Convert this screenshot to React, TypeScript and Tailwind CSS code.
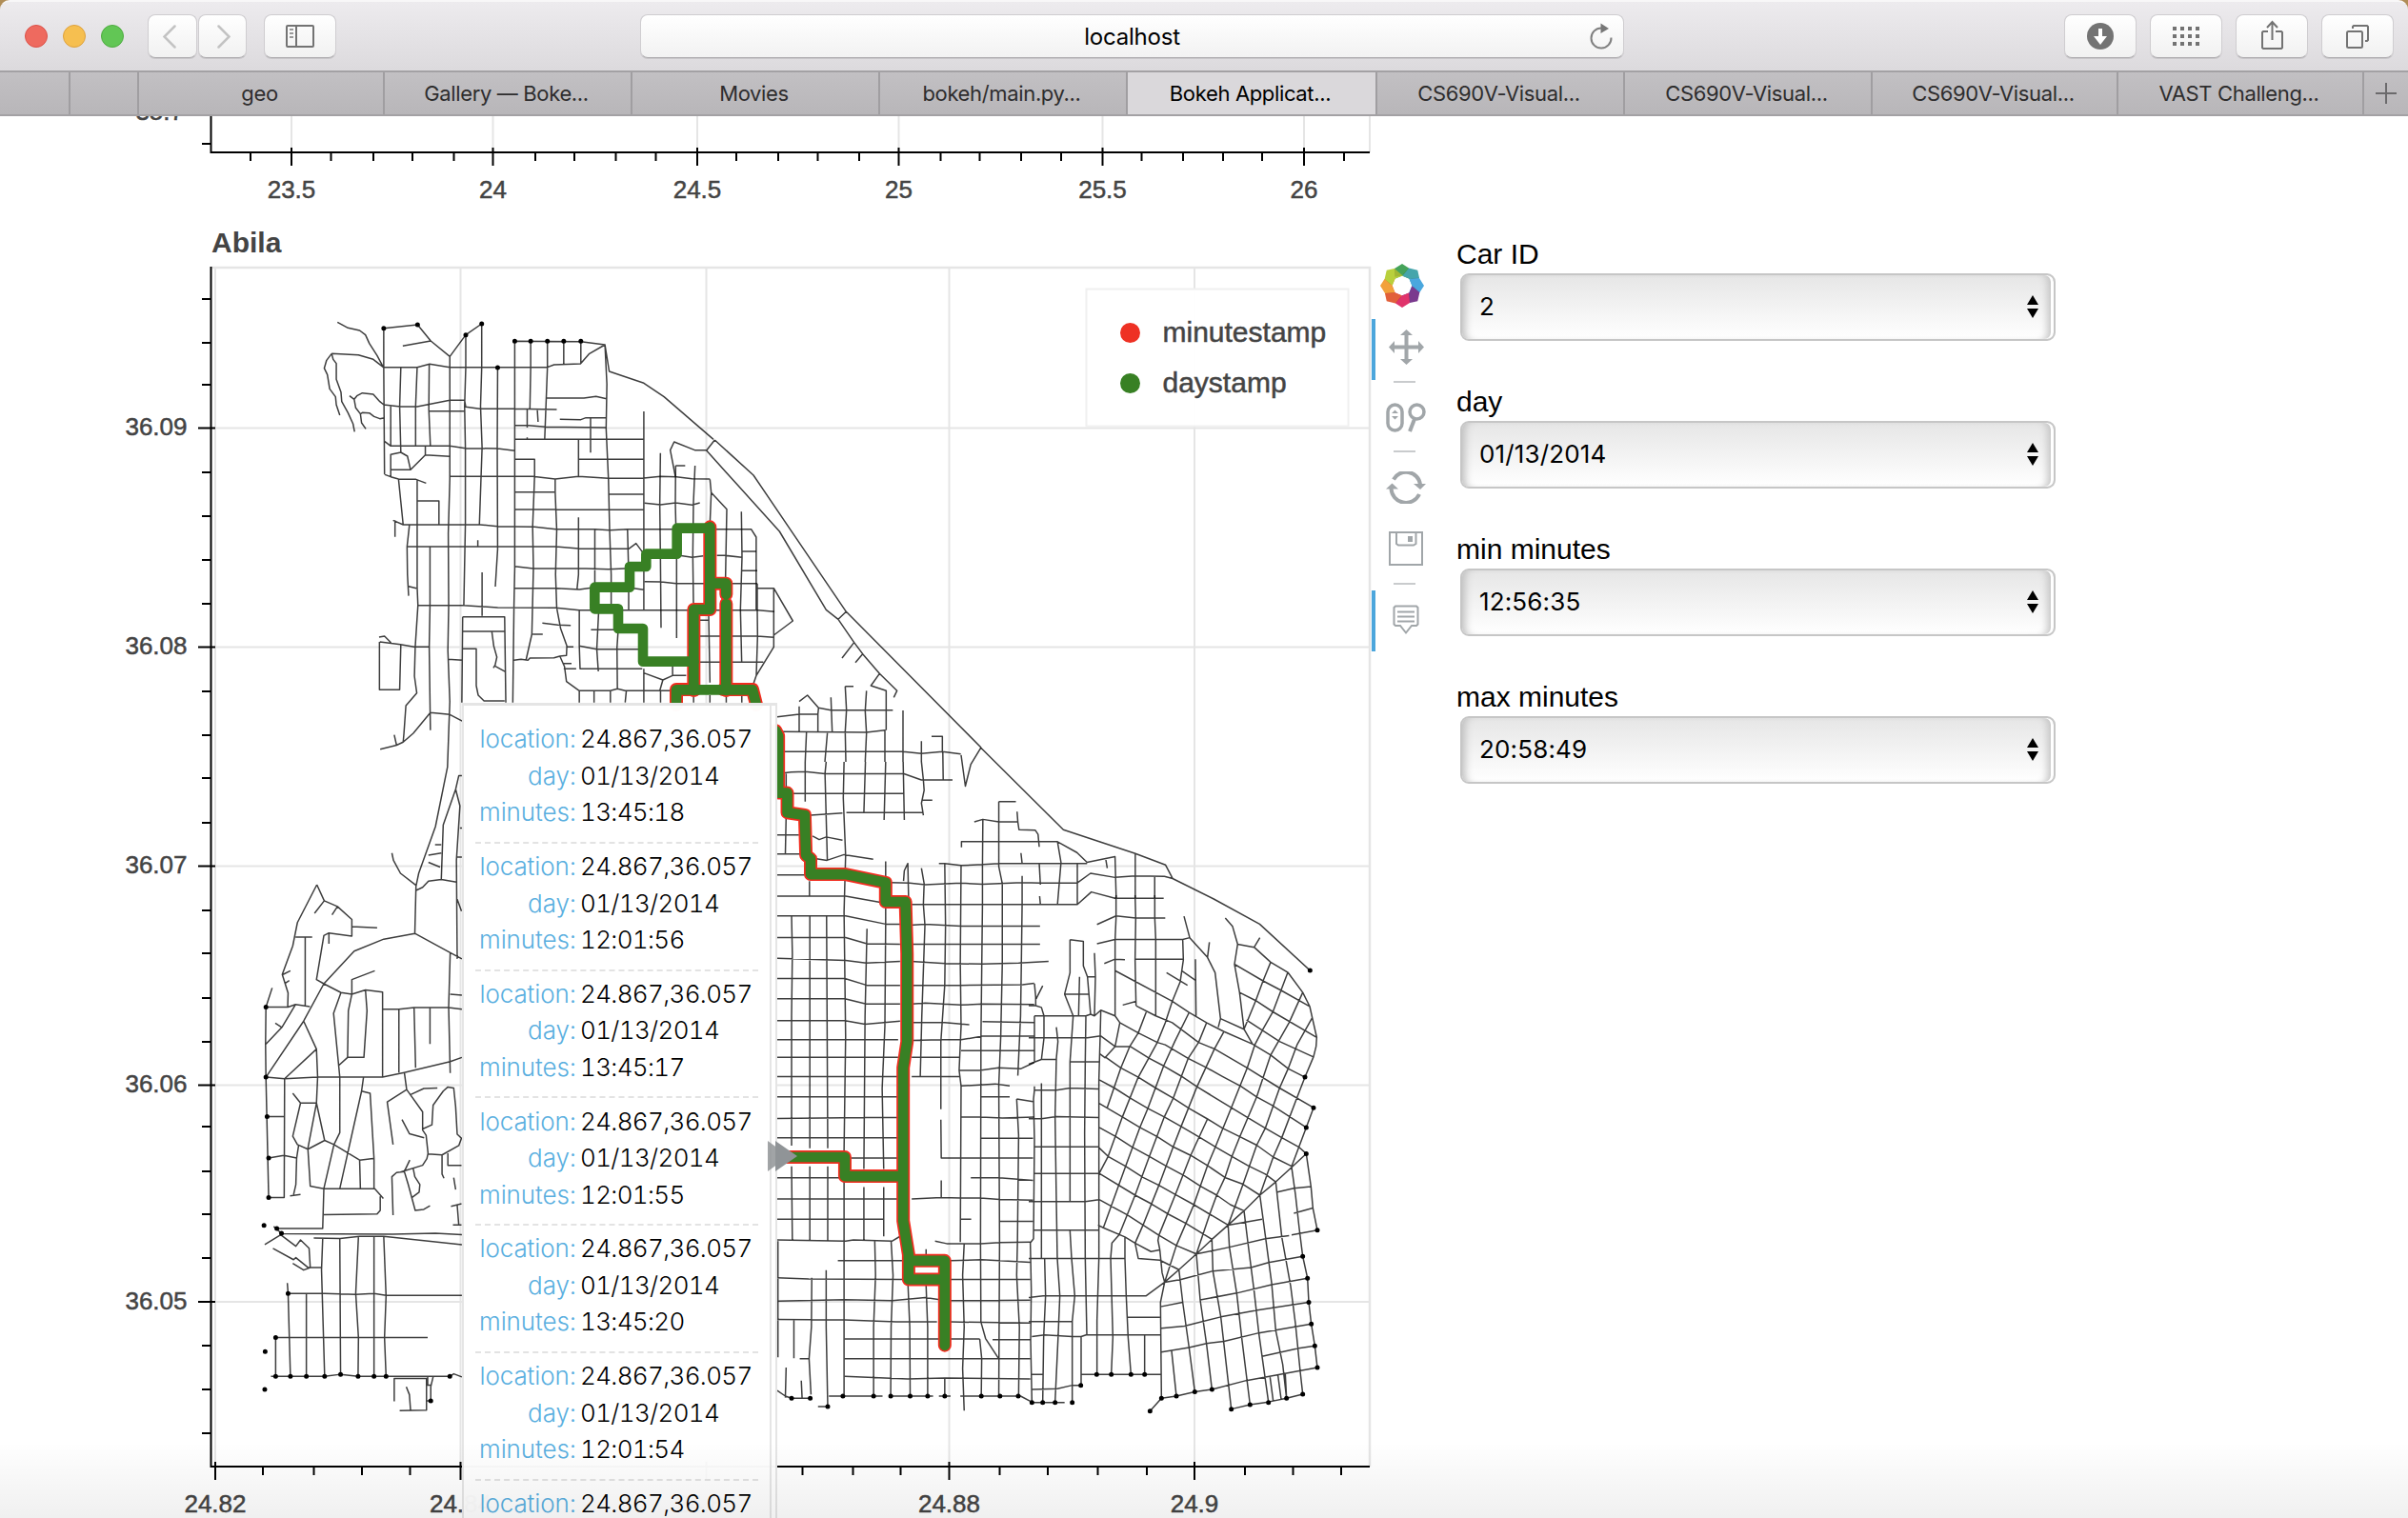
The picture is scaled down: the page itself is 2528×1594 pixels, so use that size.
import React from "react";

const roadsNW =
  "M378 205L405 223 435 231 450 245 460 272 480 310 496 347M363 304L432 308 470 322 496 347M363 304L350 325 344 350 352 370 358 415 373 440 375 465 384 498M363 304L367 322 375 335 375 385 387 425 389 455 405 490 418 525 422 550M497 224L584 213 618 264 667 313 708 245 749 210M546 280L618 264M497 224V347M496 347H583L615 337 667 347H918L935 339 1003 336 1025 305 1066 276 1004 266 834 265M834 265V347M875 265V347M918 265V347M960 265V337M1004 265V335M497 347L499 685M541 347L538 470 541 615M583 347L579 470 579 595M614 337L613 480 617 595M667 313L667 700 663 870 664 1100 662 1240 667 1400 664 1500M708 245V347L705 470 707 600 707 840 703 1097M749 210V347L746 470 750 600 743 843M790 347L789 600 790 920 784 1038M834 265L834 610 834 980 832 1100 829 1403M875 347L873 478M918 347L911 574M1066 276L1077 360 1166 397 1218 440 1345 574M1066 276L1071 400 1069 540 1075 700 1078 860 1082 1000 1082 1110M1326 608L1297 608 1244 582 1234 608 1247 690M497 465L540 471H583L667 451H705L708 472 744 478 834 478 942 480M497 465L487 455 470 432 442 428 428 437 421 448 409 437M421 448L425 475 437 494 442 490 460 491 472 502 487 509 499 506M437 494L440 522 451 541M515 470V595L499 580M515 595H667L707 602 790 603 834 610M614 485H707M866 480V537M866 568V574M892 480L894 519M834 530L870 530 913 535 1069 537M914 444H1012L1043 439 1070 446M950 511L1004 512 1017 506 1070 506M1029 506V616M834 574H1166M1166 486V1110M998 574V690M998 637H1166M834 637H885V690L880 850 882 980 878 1188 863 1269M667 691H880L938 699 998 691 1075 697 1166 696 1209 691 1250 692 1290 698 1336 699M938 699L938 740 942 860 939 1000 942 1105 952 1170 968 1225 967 1255 950 1257 935 1262 873 1263 868 1270 850 1267 832 1270M834 740H936M1075 747H1166M834 795H940L1166 796M515 670V692L500 685M515 692L535 699 580 700 606 712M515 692V622L541 615 558 627 566 670M515 670H566L604 623V595M604 623L667 628M535 699L547 843M583 700V1040L585 1097M583 768H639V843M521 829L547 843H745L790 848 885 850 940 857 1040 857 1078 860 1124 857 1442 857L1455 882V1110M526 829V881M563 845L557 912 558 1000 561 1067M561 1037L581 1043M557 912H940L998 918 1127 919 1146 902 1166 935M739 892V912M616 912L616 1097 614 1228 617 1490M834 974L882 981 998 980 1075 983 1130 980M750 993V1130M834 1043L942 1043 1000 1047 1040 1040M1130 1042L1166 1048M998 820L998 1000 994 1048M1040 857V1035M1124 857L1127 1000V1110M585 1097H703L790 1104 940 1105 1000 1112 1460 1112 1502 1117M700 1133H808L811 1403M700 1133L698 1403M698 1179H808M775 1179L780 1225 788 1260 783 1288 811 1307M779 1294L783 1286M700 1234H735V1350L740 1380 755 1398H808M662 1267L700 1270M485 1197L499 1194 516 1215M487 1212L540 1220 575 1228H614M486 1212V1363H538L541 1220M585 1097L578 1228 576 1320 582 1373 554 1413 549 1500M573 1500L617 1435 667 1441 700 1462M905 1153L945 1159 978 1160M880 1188H906M968 1228H985M958 1280H980M960 1297H992M950 1257L962 1290 967 1337 1000 1366M1000 1366H1080L1098 1360 1118 1366H1240M1000 1366V1403M1038 1366V1403M1080 1366V1403M1121 1366L1118 1403M1166 1297V1403M1209 1366V1403M1250 1380V1403M1294 1380V1403M1336 1380V1403M1378 1380V1403M1418 1380V1403M1000 1112V1225L1002 1297H1162M1000 1225L1045 1235H1160M1050 1112L1045 1235 1049 1305M1100 1175L1097 1230 1098 1360M1030 1174H1095M1166 1310L1215 1332 1240 1318H1275M1215 1332L1207 1366M1240 1290V1318";

const roadsN =
  "M230 385L280 390 328 384 380 391 404 384M280 227L278 390 280 550 282 778M328 267H358M328 267L327 384 331 550V810M389 267L384 384 382 550 384 700M436 310L440 352 489 404 485 620M440 352L436 450M535 412L537 555 532 720 536 886M458 550L485 550 537 556M340 550L380 556 415 551M537 537H582M537 598H585M230 632L282 633 330 638H585M585 653H637L697 756 637 801V838L582 928 571 960M637 653V801M585 638V721L586 804 582 928M400 804H585L637 808M405 754H432M432 740L436 950M400 886H604M451 186L573 297 700 484 865 727 1290 1155M451 186L425 219 655 474 802 721 840 751 865 727M840 751L890 824 852 873M890 824L917 860 894 887M917 860L970 922 943 960 991 976V1100M970 922L1025 976 1015 997M862 962H888M862 962L866 1037 862 1105 864 1200M717 1010L743 990 778 1030 817 1037H1012M648 1058L717 1050H776V1105M778 1030L776 1050M717 1025V1105M817 997L821 1105M929 976L925 1040 929 1110 925 1200M1044 1038V1200M660 1105L929 1107 987 1100 987 1200M740 1107L736 1200M806 1107L798 1200M665 1168H1044L1102 1174 1168 1168 1226 1175M1134 1120H1168V1168M1102 1135V1200";

const roadsSW =
  "M549 55L547 72 530 78 488 86M530 78L524 58M547 72L573 55M664 55L661 120 630 235 587 325 580 350 577 441M518 286L522 300 540 325 580 348M698 137H690L682 163 650 232 645 338M682 163L693 195 684 300 686 490M580 358L597 352 612 340 645 337 684 342M629 270H645M612 290L645 286M612 304L642 313M693 238h6M684 294h14M686 375L697 398M577 441L497 452 421 475 343 538 291 610 194 718M577 441L668 478 698 490M668 478L664 584 668 710M668 558L698 560M325 347L344 378 378 389 415 414V446L356 440 343 445 324 530 343 538 387 555 415 558 450 550 494 554V718M325 347L275 420 263 465 236 520 251 556 250 582M344 378L319 402M378 389L364 405M415 428L480 430M356 440V461M270 448H313M295 448V580M238 520L257 513M244 537L254 532M210 546L194 583 193 655 194 718 201 950H241L242 721M194 583H251L270 578 307 582M193 655L235 622 270 578M218 614L235 622M291 610L324 664 327 718 324 768 302 855M242 721L324 664M194 718L242 721 327 718H494L550 709 668 688 698 680M387 555L368 595 384 718V825L369 848 343 933M415 558V530L474 513M415 558L406 590 404 680H446L454 590 450 550M404 680L382 695M494 587H536L575 584H664L698 587M536 587V709M575 584L579 700M616 584V654M197 794H241M201 874L240 869 273 874M263 749L283 768H324L345 840 369 848 435 878 470 875M283 768L263 832 275 848 302 857 345 840M278 850L273 874 271 925 265 945M256 947L283 944M302 857L308 928 343 933H474L496 952M488 948V975L480 982 343 983M343 933L340 1010H220M445 718L440 745 384 933M440 745L462 749 472 875V933M435 878L437 933M521 848L506 766 556 742 550 709M556 742L597 785 597 820 606 830 611 865 608 875 597 888 540 901M565 752L600 740 635 739M544 800L563 827 601 835M597 818L621 810 624 772 650 745 662 737 677 739 682 775 686 828 697 836 690 850 647 868 611 866M521 984L518 910 530 902 550 900 564 878M550 900L560 925 578 975 600 973 616 966M573 895L577 910 590 925 588 940 570 950M647 868V905L652 913M662 865V888H697M677 912L682 935M670 967L697 962M686 965L690 1003M675 1003H697M191 1041L232 1022 271 1044 283 1032 305 1048 308 1085 291 1090 263 1077M212 1048L265 1070 271 1066 302 1085H337M214 1006L235 1020 520 1021 630 1019 698 1022M317 1028L385 1029 435 1025 497 1025 698 1041M340 1030L337 1090 345 1295M384 1030L386 1290M432 1025L425 1135 432 1220 431 1295M472 1025V1295M497 1025L503 1140 499 1220 503 1295M249 1115L251 1135H345L425 1137 472 1135 503 1139H698M251 1135L257 1295M298 1135V1295M219 1220H610M219 1220V1295M207 1295H345L386 1291 431 1295H667L677 1290 698 1296M524 1343V1299H607V1360L538 1361M555 1315L563 1330 566 1360M610 1295V1312H618M624 1296L618 1315V1342H608";

const roadsS =
  "M563 83L775 241 960 287 1038 309 1056 335 1163 375 1280 423 1409 512M563 83L537 115 523 157 512 97M39 133L75 130 111 129 162 133H365L410 145H490M62 133V165M111 110V187M165 110L162 133 168 300M211 110L209 180 215 290 211 400M266 110L262 208M318 110L314 222M363 110L366 222M410 110L415 145 417 165 410 190 415 213M465 92L466 145M75 171H363M125 213L207 209M217 208H415M410 184H438M130 253L147 260 165 255 207 261M39 251H95M62 215L60 288M39 288H100M140 297L167 300 211 289 286 298M39 328H110M122 340V369M39 369H215L318 383M609 187V312M609 187H653M546 226L568 221 609 226H658L656 206M658 226L661 241 703 242 710 250 713 274M513 275V264H760L810 285 836 304 908 293 911 373M760 264L769 304 760 385M568 221L567 310M455 306H470L512 310 568 308 609 306H836M884 297L888 315M666 286L669 306M713 306L716 347M811 306V385L847 361 908 373M318 302V335M364 340L366 320 375 306 377 375M410 315L417 345 415 385 419 425 411 600 407 717M330 343L380 344 420 347 512 344 567 346 669 343 716 344H810L845 325 908 333 960 330 1035 331 1056 335M385 385H810M714 369L716 385M669 330V385L667 500 665 600 658 715M470 306L472 425 470 540 460 650 460 780M512 310L510 500 512 620 507 705 512 735 510 1036M567 310V385L563 650 563 700 562 1036 563 1190M609 312L618 345 618 500 614 640 609 733 611 1035 609 1330M960 287V373M1010 331V373M380 425L420 423 512 427H715M383 462H715M383 495L472 499 567 500 660 498 737 495M385 541L510 541 670 540 700 537M705 567L722 542M385 577L420 575 512 579 567 577 700 578M385 613H470L533 617M567 611L700 613M385 647L460 646 512 646 567 639H700M385 680H508M385 717H508M512 667H700M508 705L560 705 608 700 665 702 700 690M512 735L600 731 637 735M562 756H637M512 795H562L618 797 700 795M562 836H697M460 800L461 874H697M537 912H610L697 917M461 917V950M385 953L461 950 512 951H562L611 954 697 955M512 992H538M611 996H697M445 1034L475 1039H562L611 1037 690 1036M655 760L697 765M655 760L660 830 657 1036M39 407H215L318 423H355M39 449H215L270 461 355 462M39 489L215 493 268 498 355 495M39 528H213L270 541H355M39 567H213L268 577 355 577M39 609H213L265 616 355 610M39 646H350M39 680H350M39 717H350M39 756H350M39 798L262 796H350M39 835H350M230 874H350M39 912H200M39 953H350M39 992H313M39 1032L215 1034 235 1032 335 1034 355 1025M76 407L78 480 76 600V850M76 890L78 1034M123 407V855M123 890V1034M166 407L169 855M169 890V1034M211 400L215 640 211 860M211 920V1330M270 432L265 600 262 895M262 930V1032M318 383V423L316 620 309 740 313 895M313 930V1025M41 1034V1258M39 1105L120 1107 365 1108M385 1108H690M195 1072H365M485 1072L565 1070 690 1075M39 1150L213 1147 335 1149 420 1143 457 1147M485 1149L690 1148M39 1185L213 1186 345 1190 450 1190M485 1190L690 1192M213 1223H455M485 1223H560M593 1224H690M213 1261H690M213 1295L375 1300 470 1298 690 1300M172 1333H310M330 1333H440M455 1333H485M510 1333H665L690 1343M128 1105L127 1200 121 1261 126 1330M97 1261H120M165 1090V1200L169 1353H144M82 1186V1260M62 1278L60 1336M101 1303L103 1336M39 1322L60 1333 76 1337H124M290 1034L292 1100 287 1200 287 1330M332 1034L337 1100 332 1200 331 1330M375 1110L380 1200 381 1330M422 1120L426 1200 426 1330M422 1050V1060M470 1300V1330M520 1039L516 1100 520 1200 516 1280 520 1361M563 1190L575 1222 609 1261M560 1223L565 1260 564 1330M657 1036L655 1100 662 1200 660 1333";

const roadsSE =
  "M270 9H425M335 0L337 67 335 190 338 325M397 0V67L400 130V355M275 0V67L272 130V355M215 86L275 61 337 67H430M215 143L272 130H485M238 201L272 188 303 190M335 188H487M485 130L487 190 477 255 452 312M485 130L507 125 489 62M507 125L563 183 569 138M563 183L587 228 604 363 597 388M604 363L678 394 705 438M434 228L500 265M483 223L525 250M525 188L527 355M272 222L452 312 505 345 560 375 615 401 705 438M619 67L642 92 658 144 710 153 728 125M710 153L762 197 816 227 863 286 885 327 893 360 907 418 905 445 897 475 870 535M658 144L648 203 664 286 678 394M648 203L738 252 795 280 885 327M664 286L715 310 769 343 907 418M686 367L790 430 895 475M338 325L400 355 452 375 535 433 585 452 688 508 790 567 897 625M705 438L762 470 817 510 870 535M287 375L345 405 405 433 430 440 502 480 560 507 610 533 668 562 718 593 765 617 874 683M272 445H320L380 480 425 502 480 532 530 563 638 625 695 657 745 685 797 713 850 740 874 760M240 475L290 508 345 535 400 567 455 597 505 627 M563 658L610 685 665 710 718 735 770 770 828 797M222 543L270 567 320 597 375 627 427 652 480 680 535 710 588 740 640 768 690 795 745 820 778 843M505 627L563 658M222 612L295 652 350 683 405 710 455 740 510 765 563 795 618 830 675 850 728 882M222 683L275 710 325 740 380 768 430 795 490 825 540 855 592 882 635 910 678 928M222 743L250 768 305 797 360 830 410 853 462 880 520 910 570 938 628 970M222 818L335 882 387 908 440 938 495 965 577 1012M222 895L310 940 360 970 410 1000 465 1030 528 1055M218 970L235 978 303 1005 335 1023 385 1048 412 1043M335 1023L345 1068 413 1073 473 1101M370 344L345 405 318 445 290 508 247 625M452 312L430 375 405 433 345 535 295 652 250 768 222 818M505 345L460 430 425 502 375 627 350 683 305 797 235 978M560 375L535 433 502 480 455 597 427 652 380 768 335 882 285 998 262 1023 258 1068M615 401L585 452 530 563 480 680 455 740 410 853 360 970 335 1023M563 658L510 765 462 880 410 1000 407 1015 413 1043M712 440L688 508 638 625 588 740 563 795 520 910 495 965 465 1030 428 1138M762 197L738 252 715 310 678 394M816 227L769 343 740 390 712 440M863 286L820 375 762 470 718 593 665 710 640 768 618 830 592 882 570 938 528 1055M893 360L845 440 817 510 790 567 745 685 718 735 675 850 628 970M870 535L845 595 797 713 770 770 728 882M897 625L874 683 828 797M874 760L828 800 778 843 728 882 678 928 628 970 577 1012 528 1055 473 1101 428 1138 370 1178H45L0 1183M874 760L889 857 895 920 909 985M783 873L835 862 889 857M835 935L895 920M828 800L840 880 852 980 863 1062 878 1126 882 1197 890 1261 901 1325 909 1389M778 843L797 1005 825 1150 840 1260 855 1400 863 1467M728 882L745 1000 765 1140 778 1280 800 1380 812 1480M678 928L690 1020 710 1165 725 1290 755 1490M628 970L632 1035 655 1170 672 1310 697 1498M577 1012L580 1105 605 1240 638 1511M528 1055L540 1190 560 1320 577 1453M473 1101L485 1197 505 1330 523 1460M428 1138L415 1197 418 1479M450 1340L465 1473M628 970L735 953M528 1055L632 1035 745 1010 820 1001M828 999L909 985M428 1138L480 1130 580 1105 700 1095 755 1080 863 1062M540 1190L655 1170 765 1145 878 1126M415 1210L485 1197M418 1273L490 1267 605 1240 720 1220 882 1197M418 1343L505 1330 560 1318 615 1312 725 1287 890 1261M735 1356L850 1332 901 1325M418 1479L465 1473 523 1460 577 1453 685 1427 909 1389M638 1511L697 1498 755 1490 812 1479 863 1467M760 1417L770 1487M785 1412L795 1482M808 1408L812 1479M382 1517L418 1479M130 131L172 136V208L185 240 195 352M130 131V228L113 291 140 355M113 291H190M160 240L157 355M207 170L210 240 207 355 195 350 180 355H18M185 240H210M207 355L227 338 272 355 287 375 272 445 240 478 222 465M227 338L225 415 221 543V1068L215 1250V1409M180 355L178 490 176 700 178 1068 183 1292M140 355L130 490V900M130 987L135 1068 145 1178 137 1253V1490M87 388L92 430 87 480 83 650 87 900 90 1068 98 1178 92 1310 83 1490M40 553V1068M50 1068L53 1178 47 1300 44 1490M18 260L22 300V325M18 355V490M48 355V420L40 483M0 325H22L40 330 48 355M0 497L40 483H87M0 419H185L227 414 272 445M130 490H221M18 562V573L15 600 18 720 15 1010 5 1022 8 1160 6 1310 10 1490M18 573H87L130 567 221 570M0 657H40L87 651 221 654M18 740H221M18 818H221M0 901H178L221 895M15 985H221M0 1068H303V1005M303 1068L307 1178 313 1300 322 1409M258 1068L265 1300 260 1409M165 1409H418M183 1293H418M310 1241H413M365 1293V1409M0 1254H137M10 1298L50 1293 137 1298 165 1298 183 1292M165 1298V1441H137L90 1451 10 1453M10 1409H44M10 1492H113M413 1043L420 1110 428 1138M296 323L338 312";

const dotsNW = "M497 224h0M584 213h0M708 245h0M749 210h0M790 348h0M834 265h0M875 265h0M918 265h0M960 265h0M1004 265h0";
const dotsSW =
  "M194 583h0M194 718h0M197 794h0M201 874h0M201 950h0M189 1004h0M222 1010h0M234 1019h0M251 1135h0M219 1220h0M192 1247h0M191 1320h0M219 1295h0M257 1295h0M298 1295h0M345 1295h0M386 1291h0M431 1295h0M472 1295h0M503 1295h0M667 1295h0M618 1342h0";
const dotsS =
  "M76 1337h0M124 1337h0M169 1353h0M208 1333h0M287 1333h0M331 1333h0M381 1333h0M426 1333h0M470 1333h0M564 1333h0M612 1333h0M659 1333h0";
const dotsSE =
  "M10 1492h0M44 1492h0M83 1492h0M137 1492h0M164 1441h0M214 1409h0M260 1409h0M322 1409h0M365 1409h0M382 1517h0M418 1479h0M465 1473h0M523 1460h0M577 1453h0M638 1511h0M697 1498h0M755 1492h0M812 1479h0M863 1467h0M909 1389h0M901 1325h0M890 1261h0M882 1197h0M878 1126h0M863 1062h0M909 985h0M874 760h0M874 683h0M897 625h0M870 535h0M886 221h0";

const NW = "translate(200 270) scale(0.40816 0.33333)";
const N = "translate(600 400) scale(0.33333)";
const SW = "translate(200 740) scale(0.40816 0.54464)";
const S = "translate(800 740) scale(0.40816 0.54464)";
const SE = "translate(1080 940) scale(0.33333 0.35714)";

const regions = [
  { t: NW, roads: roadsNW, dots: dotsNW },
  { t: N, roads: roadsN, dots: "" },
  { t: SW, roads: roadsSW, dots: dotsSW },
  { t: S, roads: roadsS, dots: dotsS },
  { t: SE, roads: roadsSE, dots: dotsSE },
];

const dayNorth = "M436 464H332V545H235V585H183V650H73V718H147V780H225V884H385";
const loopNorth = "M436 460V720H385V975M436 638H487V672M487 702V975";
const minuteEnds = "M330 1020V972H390M478 972H570L582 1020";
const dayBase = "M330 1020V973H570L582 1020";
const trackSouth =
  "M35 50L42 60V170H65V208L110 213 113 290 125 297V327H215L318 343V380H369L373 480V650L363 700V995L377 1060V1108H470M377 1072H470V1235M60 872H213V909H363";

const topMajor: [number, string][] = [
  [306, "23.5"], [517.5, "24"], [732, "24.5"], [943.5, "25"], [1157.5, "25.5"], [1369, "26"],
];
const topMinor = [263, 347.5, 392, 433, 476.5, 562, 603, 646.5, 688.5, 773, 817, 858.5, 902, 987.5, 1028.5, 1072, 1114, 1198.5, 1242, 1284, 1325, 1411];
const xMajor: [number, string][] = [[226, "24.82"], [483.5, "24.84"], [741.5, "24.86"], [996.5, "24.88"], [1254, "24.9"]];
const xMinor = [276, 329.5, 380, 430.5, 842.5, 895.5, 945.5, 1049.5, 1100, 1152.5, 1204, 1307, 1357.5, 1408];
const yMajor: [number, string][] = [[449.5, "36.09"], [679.5, "36.08"], [909.5, "36.07"], [1139.5, "36.06"], [1367, "36.05"]];
const yMinor = [314, 360, 404, 496, 542, 588, 634, 726, 772, 817, 864, 956, 1001, 1048, 1094, 1183, 1230, 1275, 1321, 1413, 1459, 1505];

function Chart() {
  return (
    <svg width="1440" height="1472" viewBox="0 122 1440 1472" className="block shrink-0 font-['Liberation_Sans',Arial,sans-serif]" fontSize="26" fill="#444">
      <g stroke="#e5e5e5" strokeWidth="2" fill="none">
        {topMajor.map(([x]) => <path key={x} d={`M${x} 122V160`} />)}
        <path d="M1438 122V160" />
        <path d="M222 281H1438V1540" strokeWidth="2.5" />
        {xMajor.map(([x]) => <path key={x} d={`M${x} 281V1540`} />)}
        {yMajor.map(([y]) => <path key={y} d={`M222 ${y}H1438`} />)}
      </g>

      {regions.map((r) => (
        <g key={r.t} transform={r.t} fill="none" strokeLinejoin="round">
          <path d={r.roads} stroke="#000" strokeOpacity="0.76" strokeWidth="1.5" vectorEffect="non-scaling-stroke" />
          <path d={r.dots} stroke="#000" strokeWidth="5" strokeLinecap="round" vectorEffect="non-scaling-stroke" />
        </g>
      ))}

      <g fill="none" strokeLinejoin="round" strokeLinecap="round">
        <g stroke="#f22c1f" strokeWidth="14">
          <path transform={N} d={loopNorth} vectorEffect="non-scaling-stroke" />
          <path transform={N} d={minuteEnds} vectorEffect="non-scaling-stroke" />
          <path transform={S} d={trackSouth} vectorEffect="non-scaling-stroke" />
        </g>
        <g stroke="#388024" strokeWidth="10.6">
          <path transform={N} d={dayNorth} vectorEffect="non-scaling-stroke" />
          <path transform={N} d={loopNorth} vectorEffect="non-scaling-stroke" />
          <path transform={N} d={dayBase} vectorEffect="non-scaling-stroke" />
          <path transform={S} d={trackSouth} vectorEffect="non-scaling-stroke" />
        </g>
      </g>

      <g stroke="#000" strokeWidth="2" fill="none">
        <path d="M221.5 122V160H1438M212 151H222M221.500 280V1540H1438" />
        {topMajor.map(([x]) => <path key={x} d={`M${x} 155V174`} />)}
        {topMinor.map((x) => <path key={x} d={`M${x} 160V169`} />)}
        {xMajor.map(([x]) => <path key={x} d={`M${x} 1535V1554`} />)}
        {xMinor.map((x) => <path key={x} d={`M${x} 1540V1549`} />)}
        {yMajor.map(([y]) => <path key={y} d={`M208 ${y}H226`} />)}
        {yMinor.map((y) => <path key={y} d={`M212 ${y}H222`} />)}
      </g>
      <g textAnchor="middle" stroke="#444" strokeWidth="0.5">
        {topMajor.map(([x, t]) => <text key={x} x={x} y="208">{t}</text>)}
        {xMajor.map(([x, t]) => <text key={x} x={x} y="1588">{t}</text>)}
      </g>
      <g textAnchor="end" stroke="#444" strokeWidth="0.5">
        <text x="193" y="125.500">35.7</text>
        {yMajor.map(([y, t]) => <text key={y} x="196.500" y={y + 7.5}>{t}</text>)}
      </g>
      <text x="222" y="265" fontSize="30" fontWeight="700">Abila</text>

      <rect x="1140.500" y="303.500" width="275" height="144" fill="#fff" fillOpacity="0.95" stroke="#f0f0f0" strokeWidth="2" />
      <circle cx="1186.500" cy="349.500" r="10.500" fill="#ee3124" />
      <circle cx="1186.500" cy="402.500" r="10.500" fill="#388024" />
      <g fontSize="30" stroke="#444" strokeWidth="0.5">
        <text x="1220.500" y="359">minutestamp</text>
        <text x="1220.500" y="412">daystamp</text>
      </g>
    </svg>
  );
}

const hits = ["13:45:18", "12:01:56", "13:45:17", "12:01:55", "13:45:20", "12:01:54", "13:45:19"];

function Tooltip() {
  return (
    <div className="absolute left-[485px] top-[616px] h-[856px] w-[331px] overflow-hidden border-x-[2px] border-t-[3px] border-[#e5e5e5] bg-white/[0.98]">
      <div className="h-[900px] w-[323px] border-r-[2px] border-[#e5e5e5] px-[12px] pt-[11px] font-['Inter',sans-serif] text-[26px] font-light">
        {hits.map((m, i) => (
          <div key={i} className="h-[133.8px] border-b-[2px] border-dashed border-[#e3e3e3] pt-[5px]">
            {[["location:", "24.867,36.057"], ["day:", "01/13/2014"], ["minutes:", m]].map(([k, v]) => (
              <div key={k} className="flex h-[38.5px] items-center whitespace-nowrap leading-[38px]">
                <span className="w-[106px] shrink-0 text-right tracking-[-0.1px] text-[#5aafdf]">{k}</span>
                <span className="ml-[4px] tracking-[-0.65px] tabular-nums text-black">{v}</span>
              </div>
            ))}
          </div>
        ))}
      </div>
    </div>
  );
}

const petals = ["#46a35a", "#45a5ab", "#4aa7de", "#7a3a8e", "#e0336b", "#e2603a", "#f2a13c", "#b9d03c"];

function BokehLogo() {
  return (
    <svg width="46" height="46" viewBox="-23 -23 46 46">
      {petals.map((c, i) => (
        <g key={c} transform={`rotate(${i * 45})`}>
          <path d="M-8 -18L0 -23 7 -18.500 8 -7 0 -10.500 -7 -7.500Z" fill={c} />
          <path d="M1 -12L7 -18.500 8 -7Z" fill="#000" fillOpacity="0.12" />
        </g>
      ))}
    </svg>
  );
}

const G = "#a1a6a9";

function PanIcon() {
  return (
    <svg width="37" height="37" viewBox="0 0 37 37" fill={G} className="mb-[5px]">
      <path d="M16.500 6H12L18.500 0 25 6H20.500V16.500H31V12L37 18.500 31 25V20.500H20.500V31H25L18.500 37 12 31H16.500V20.500H6V25L0 18.500 6 12V16.500H16.500Z" />
    </svg>
  );
}

function WheelZoomIcon() {
  return (
    <svg width="42" height="31" viewBox="0 0 42 31" fill="none" stroke={G}>
      <rect x="2" y="2" width="15" height="27" rx="7.500" strokeWidth="3.500" />
      <path d="M6 11L9.500 7.500 13 11ZM6 14L9.500 17.500 13 14Z" fill={G} stroke="none" />
      <circle cx="32.500" cy="9.500" r="7.500" strokeWidth="3.500" />
      <path d="M30 17L25 30" strokeWidth="4" />
    </svg>
  );
}

function ResetIcon() {
  return (
    <svg width="42" height="34" viewBox="0 0 42 34" fill="none" stroke={G} strokeWidth="4">
      <path d="M8 8.500A15 15 0 0 1 36 13.500M5.500 18A15.500 15.500 0 0 0 35 24" />
      <path d="M29 13H42L36 19ZM0 18.500H13L6.500 12.500Z" fill={G} stroke="none" />
    </svg>
  );
}

function SaveIcon() {
  return (
    <svg width="36" height="36" viewBox="0 0 36 36" fill="none" stroke={G} strokeWidth="2">
      <rect x="1" y="1" width="34" height="34" />
      <path d="M8 1V13L10 14.500H26L28.500 13V1" />
      <rect x="20" y="5" width="5" height="6" fill={G} stroke="none" />
    </svg>
  );
}

function HoverIcon() {
  return (
    <svg width="28" height="32" viewBox="0 0 28 32" fill="none" stroke={G} strokeWidth="2" className="mb-[3px]">
      <path d="M3 1.500H25L26.500 3V20.500L25 22H20L14 29.500 8 22H3L1.500 20.500V3Z" />
      <path d="M5 7.500H23M5 12.500H23M5 17.500H23" />
    </svg>
  );
}

function Tool({ active, children }: { active?: boolean; children: React.ReactNode }) {
  return (
    <div className={`flex h-[64px] w-[72px] items-center justify-center border-l-4 pr-[4px] ${active ? "border-[#4ca6dc]" : "border-transparent"}`}>
      {children}
    </div>
  );
}

function Toolbar() {
  const sep = <div className="my-[0.5px] ml-[23px] h-[2px] w-[23px] bg-[#c9cbcd]" />;
  return (
    <div className="flex w-[80px] shrink-0 flex-col pt-[155px]">
      <div className="mb-[12px] ml-[9px]"><BokehLogo /></div>
      <Tool active><PanIcon /></Tool>
      {sep}
      <div className="h-[4px]" />
      <Tool><WheelZoomIcon /></Tool>
      <div className="h-[2px]" />
      {sep}
      <div className="h-[5px]" />
      <Tool><ResetIcon /></Tool>
      <Tool><SaveIcon /></Tool>
      <div className="h-[3px]" />
      {sep}
      <div className="h-[6px]" />
      <Tool active><HoverIcon /></Tool>
    </div>
  );
}

function Select({ label, value }: { label: string; value: string }) {
  return (
    <div className="mb-[47px]">
      <div className="h-[37px] font-['Liberation_Sans',Arial,sans-serif] text-[30px] leading-[33px] text-black">{label}</div>
      <div className="ml-[4px] flex h-[71px] w-[625px] items-center justify-between rounded-[9px] border-2 border-[#c6c6c6] bg-gradient-to-b from-[#e6e6e6] to-white pb-[2px] pl-[18px] pr-[16px] shadow-[inset_9px_0_8px_-6px_#bdbdbd,inset_-3px_0_0_#fff,inset_-12px_0_8px_-6px_#c0c0c0]">
        <span className="font-['Inter',sans-serif] text-[26px] tracking-[0.15px] text-black">{value}</span>
        <svg width="12" height="24" viewBox="0 0 12 24"><path d="M0 10L6 0 12 10ZM0 14L6 24 12 14Z" /></svg>
      </div>
    </div>
  );
}

function ToolButton({ className, children }: { className: string; children?: React.ReactNode }) {
  return (
    <div className={`flex h-[46px] shrink-0 items-center justify-center rounded-[8px] border border-[#cfcdd0] border-b-[#aeacaf] bg-gradient-to-b from-white to-[#f1f1f1] shadow-[0_1px_0_#c9c7ca] ${className}`}>
      {children}
    </div>
  );
}

const tabs = [
  { t: "", w: "w-[74px]" },
  { t: "", w: "w-[72px]" },
  { t: "geo", w: "w-[258px]" },
  { t: "Gallery — Boke...", w: "w-[260px]" },
  { t: "Movies", w: "w-[260px]" },
  { t: "bokeh/main.py...", w: "w-[260px]" },
  { t: "Bokeh Applicat...", w: "w-[262px]", active: true },
  { t: "CS690V-Visual...", w: "w-[260px]" },
  { t: "CS690V-Visual...", w: "w-[260px]" },
  { t: "CS690V-Visual...", w: "w-[258px]" },
  { t: "VAST Challeng...", w: "w-[258px]" },
];

function Chrome() {
  return (
    <header className="shrink-0 font-['Inter',sans-serif]">
      <div className="flex h-[74px] items-start rounded-t-[10px] border-t-2 border-[#f8f7f8] bg-gradient-to-b from-[#edebee] to-[#dcdadd] pl-[26px] pr-[15px] pt-[13px]">
        <div className="mt-[11px] flex gap-[16px]">
          <span className="h-6 w-6 rounded-full border border-[#dc5148] bg-[#ee6a5f]" />
          <span className="h-6 w-6 rounded-full border border-[#dea13c] bg-[#f6bf50]" />
          <span className="h-6 w-6 rounded-full border border-[#4dab3f] bg-[#62c655]" />
        </div>
        <ToolButton className="ml-[25px] w-[52px]">
          <svg width="14" height="25" viewBox="0 0 14 25" fill="none" stroke="#c3c3c3" strokeWidth="2.500" strokeLinecap="round" className="mr-[6px]"><path d="M12.500 1.500L1.500 12.500 12.500 23.500" /></svg>
        </ToolButton>
        <ToolButton className="ml-px w-[51px]">
          <svg width="14" height="25" viewBox="0 0 14 25" fill="none" stroke="#c3c3c3" strokeWidth="2.500" strokeLinecap="round" className="ml-[3px]"><path d="M1.500 1.500L12.500 12.500 1.500 23.500" /></svg>
        </ToolButton>
        <ToolButton className="ml-[18px] w-[76px]">
          <svg width="30" height="24" viewBox="0 0 30 24" fill="none" stroke="#737373" strokeWidth="2">
            <rect x="1" y="1" width="28" height="22" rx="1" />
            <path d="M11 1V23" />
            <path d="M4 5H8M4 9H8M4 13H8" stroke="#999" />
          </svg>
        </ToolButton>
        <div className="ml-[319px] flex h-[46px] w-[1033px] items-center rounded-[8px] border border-[#cfcdd0] border-b-[#aeacaf] bg-gradient-to-b from-white to-[#f2f2f2] shadow-[0_1px_0_#c9c7ca]">
          <div className="flex-1 pl-[35px] pt-[2px] text-center text-[24px] tracking-[-0.2px] text-black">localhost</div>
          <svg width="24" height="28" viewBox="0 0 24 28" fill="none" stroke="#808080" strokeWidth="2" className="mr-[11px]">
            <path d="M12 5.500A10.500 10.500 0 1 0 22.500 15.500" />
            <path d="M11.500 0.500L20 6 11.500 11Z" fill="#777" stroke="none" />
          </svg>
        </div>
        <div className="ml-auto flex gap-[14px]">
          <ToolButton className="w-[76px]">
            <svg width="28" height="28" viewBox="0 0 28 28"><circle cx="14" cy="14" r="14" fill="#737373" /><path d="M12 6H16V14H21L14 23 7 14H12Z" fill="#fff" /></svg>
          </ToolButton>
          <ToolButton className="w-[76px]">
            <svg width="28" height="20" viewBox="0 0 28 20" fill="#737373">
              {[0, 8, 16, 24].map((x) => [0, 8, 16].map((y) => <rect key={`${x}-${y}`} x={x} y={y} width="4" height="4" />))}
            </svg>
          </ToolButton>
          <ToolButton className="w-[76px]">
            <svg width="24" height="32" viewBox="0 0 24 32" fill="none" stroke="#737373" strokeWidth="2" className="mb-[3px]">
              <path d="M8 12H3L2 13V29L3 30H22L23 29V13L22 12H16M12.500 21V2M7 8L12.500 2 18 8" />
            </svg>
          </ToolButton>
          <ToolButton className="w-[76px]">
            <svg width="26" height="26" viewBox="0 0 26 26" fill="none" stroke="#737373" strokeWidth="2">
              <rect x="2" y="8" width="16" height="17" rx="1.500" />
              <path d="M8 5V3L9 2H23L24 3V17L23 18H21" />
            </svg>
          </ToolButton>
        </div>
      </div>
      <div className="flex h-[48px] border-y-2 border-[#a3a1a4] bg-gradient-to-b from-[#c2c0c3] to-[#b8b6b9]">
        {tabs.map((tab, i) => (
          <div
            key={i}
            className={`flex shrink-0 items-center justify-center whitespace-nowrap border-r-2 border-[#a09ea1] pr-[3px] pt-px text-[22px] tracking-[-0.35px] ${tab.w} ${tab.active ? "bg-[#dad8db] text-black" : "text-[#2e2d2e]"}`}
          >
            {tab.t}
          </div>
        ))}
        <div className="flex flex-1 items-center justify-center">
          <svg width="22" height="22" viewBox="0 0 22 22" stroke="#6b6a6c" strokeWidth="2"><path d="M11 0V22M0 11H22" /></svg>
        </div>
      </div>
    </header>
  );
}

export default function App() {
  return (
    <div className="flex h-[1594px] w-[2528px] flex-col overflow-hidden bg-[#b08d57]">
      <Chrome />
      <main className="relative flex h-[1472px] overflow-hidden bg-white">
        <Chart />
        <Toolbar />
        <div className="ml-[9px] flex flex-col pt-[128px]">
          <Select label="Car ID" value="2" />
          <Select label="day" value="01/13/2014" />
          <Select label="min minutes" value="12:56:35" />
          <Select label="max minutes" value="20:58:49" />
        </div>
        <Tooltip />
        <svg width="32" height="32" viewBox="0 0 32 32" fill="#909497" className="absolute left-[806px] top-[1076px]">
          <path d="M0 0L22 16 0 32Z" fillOpacity="0.85" />
          <path d="M8 0L31 16 8 32Z" />
        </svg>
        <div className="absolute inset-x-0 bottom-0 h-[80px] bg-gradient-to-b from-transparent to-black/[0.06]" />
      </main>
    </div>
  );
}
